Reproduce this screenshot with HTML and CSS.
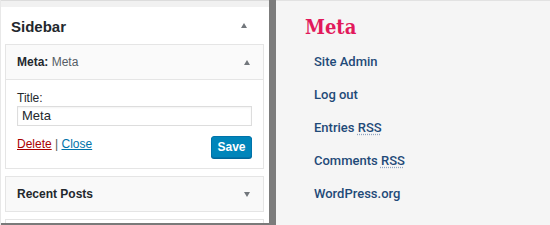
FILE: index.html
```html
<!DOCTYPE html>
<html>
<head>
<meta charset="utf-8">
<link rel="stylesheet" href="styles.css">
</head>
<body>
<div class="page">
  <div class="left">
    <div class="topstrip"></div>
    <div class="sidebar">
      <div class="sidebar-head">
        <h2 class="sidebar-title">Sidebar</h2>
        <span class="tri tri-up"></span>
      </div>
      <div class="widget">
        <div class="widget-head">
          <span class="widget-title"><b>Meta:</b> <span class="muted">Meta</span></span>
          <span class="tri tri-up"></span>
        </div>
        <div class="widget-body">
          <label class="field-label">Title:</label>
          <div class="input">Meta</div>
          <div class="actions">
            <div class="links"><a class="del">Delete</a> <span class="sep">|</span> <a class="close">Close</a></div>
            <button class="save">Save</button>
          </div>
        </div>
      </div>
      <div class="widget closed">
        <div class="widget-head">
          <span class="widget-title"><b>Recent Posts</b></span>
          <span class="tri tri-down"></span>
        </div>
      </div>
      <div class="widget stub"></div>
    </div>
    <div class="bottomstrip"></div>
  </div>
  <div class="divider"></div>
  <div class="right">
    <h2 class="meta-title">Meta</h2>
    <ul class="meta-list">
      <li><a>Site Admin</a></li>
      <li><a>Log out</a></li>
      <li><a>Entries <abbr>RSS</abbr></a></li>
      <li><a>Comments <abbr>RSS</abbr></a></li>
      <li><a>WordPress.org</a></li>
    </ul>
  </div>
</div>
</body>
</html>
```
FILE: styles.css
```css
* { box-sizing: border-box; }
html, body { margin: 0; padding: 0; }
body { width: 550px; height: 225px; overflow: hidden; background: #f5f5f5; }
.page { display: flex; height: 225px; }

.left {
  width: 269px;
  flex: none;
  display: flex;
  flex-direction: column;
  background: #fff;
  border-left: 1px solid #e8e8e8;
  font-family: "Liberation Sans", Arial, sans-serif;
  color: #23282d;
}
.topstrip { height: 7px; background: #f1f1f1; border-top: 1px solid #dcdcdc; flex: none; }
.sidebar { flex: 1; padding: 0 5px 0 4px; overflow: hidden; }
.sidebar-head {
  height: 37px;
  display: flex;
  align-items: center;
  justify-content: space-between;
  padding: 0 17px 0 6px;
}
.sidebar-title { margin: 0; font-size: 15px; font-weight: 700; padding-top: 1px; }

.tri { width: 0; height: 0; border-left: 3.5px solid transparent; border-right: 3.5px solid transparent; }
.tri-up { border-bottom: 5px solid #72777c; }
.tri-down { border-top: 5px solid #72777c; }

.widget { border: 1px solid #e5e5e5; background: #fff; margin-bottom: 7px; }
.widget-head {
  height: 34px;
  background: #fafafa;
  display: flex;
  align-items: center;
  justify-content: space-between;
  padding: 0 13px 0 11px;
  font-size: 12px;
}
.widget > .widget-head + .widget-body { border-top: 1px solid #e5e5e5; }
.widget-title b { font-weight: 700; }
.muted { color: #555d66; }
.closed .widget-head { background: #f9f9f9; }
.widget-body { padding: 12px 11px 10px; }
.field-label { display: block; font-size: 12px; line-height: 13px; }
.input {
  margin-top: 1px;
  height: 20px;
  border: 1px solid #ddd;
  font-size: 13px;
  line-height: 18px;
  padding: 0 4px;
  box-shadow: inset 0 1px 2px rgba(0,0,0,.05);
}
.actions { display: flex; justify-content: space-between; align-items: flex-start; margin-top: 10px; }
.links { font-size: 12px; line-height: 14px; padding-top: 1px; }
.del { color: #a00; text-decoration: underline; }
.close { color: #0073aa; text-decoration: underline; }
.sep { color: #555; }
.save {
  width: 41px;
  height: 22px;
  background: #0085ba;
  border: 1px solid #0073aa;
  border-radius: 3px;
  color: #fff;
  font-family: "Liberation Sans", Arial, sans-serif;
  font-size: 12px;
  font-weight: 700;
  padding: 0;
  box-shadow: 0 1px 0 #006799;
}
.stub { height: 20px; margin-bottom: 0; }
.bottomstrip { height: 2px; background: #7a7a7a; flex: none; }

.divider { width: 7px; flex: none; background: #7c7c7c; }

.right { flex: 1; background: #f5f5f5; border-top: 1px solid #e2e2e2; padding: 15px 0 0 29px; }
.meta-title {
  margin: 0;
  font-family: "DejaVu Serif", serif;
  font-stretch: condensed;
  font-weight: 700;
  font-size: 20px;
  line-height: 22px;
  color: #e2195b;
}
.meta-list { list-style: none; margin: 16px 0 0; padding: 0 0 0 9px; }
.meta-list li { height: 33px; font-family: Roboto, sans-serif; font-weight: 500; font-size: 13px; line-height: 16px; }
.meta-list a { color: #1f4a78; text-decoration: none; }
.meta-list abbr { text-decoration: underline dotted #8fa4bf; text-underline-offset: 2px; }
```
